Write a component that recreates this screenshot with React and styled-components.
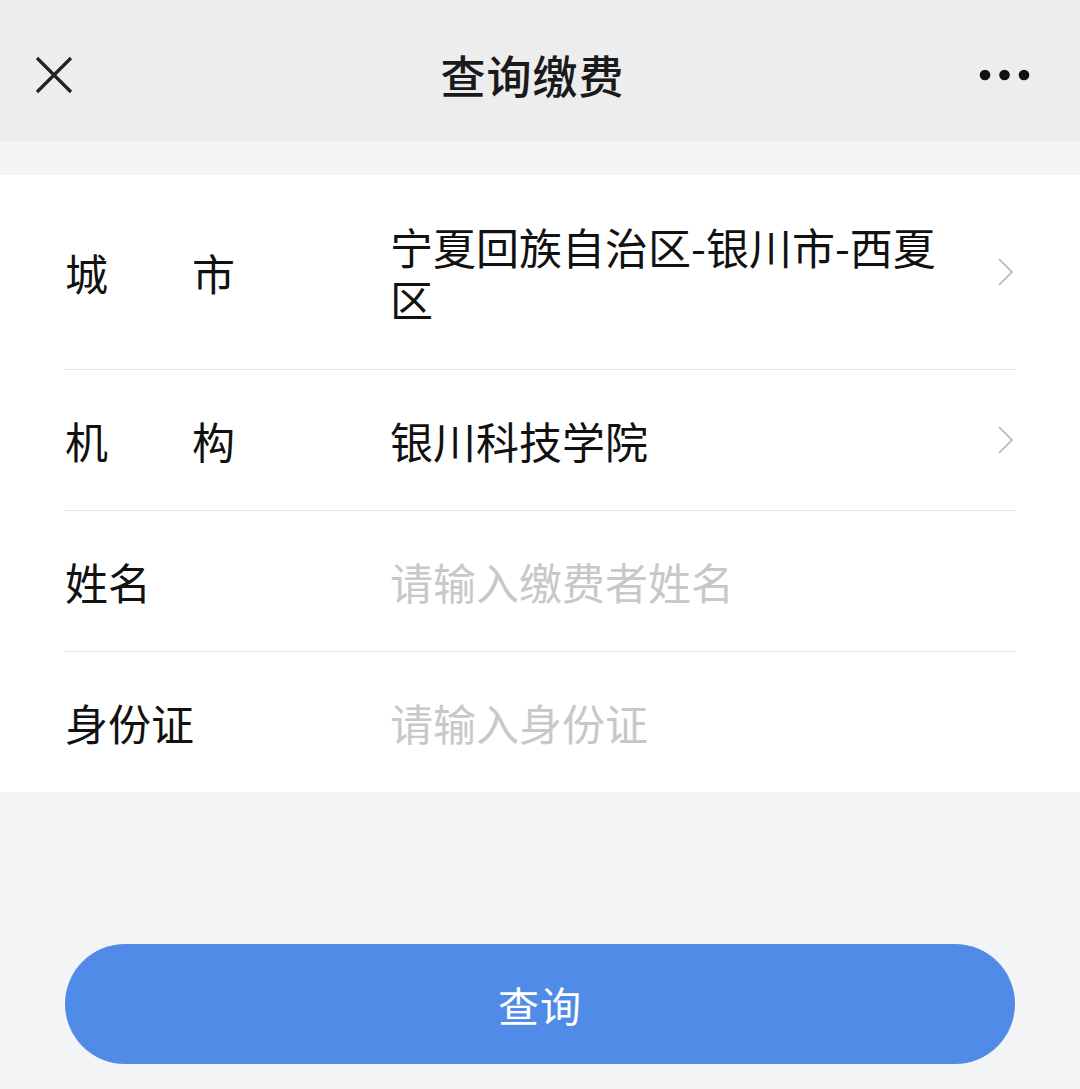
import React from "react";
import styled, { createGlobalStyle } from "styled-components";

const GlobalStyle = createGlobalStyle`
  html, body {
    margin: 0;
    padding: 0;
    background: #f3f4f6;
    font-family: "Noto Sans CJK SC", "Noto Sans", sans-serif;
  }
`;

const Page = styled.div`
  width: 1080px;
  min-height: 1089px;
  background: #f3f4f6;
`;

const Header = styled.div`
  height: 141px;
  background: #ededed;
  display: flex;
  align-items: center;
  justify-content: space-between;
  padding: 8px 49px 0 34px;
  box-sizing: border-box;
`;

const Title = styled.h1`
  margin: 0;
  font-size: 45px;
  font-weight: 500;
  color: #1a1a1a;
  letter-spacing: 1px;
`;

const IconBox = styled.div`
  width: 80px;
  display: flex;
  justify-content: ${(p) => (p.right ? "flex-end" : "flex-start")};
  align-items: center;
`;

const Card = styled.div`
  margin-top: 34px;
  background: #fff;
  padding: 0 65px;
`;

const Row = styled.div`
  display: flex;
  align-items: center;
  padding: ${(p) => (p.first ? "45px 0" : "44px 0")};
  border-top: ${(p) => (p.first ? "none" : "1px solid #e6e6e6")};
  font-size: 43px;
  line-height: 52px;
  color: #111;
`;

const Label = styled.div`
  width: ${(p) => (p.justify ? "170px" : "auto")};
  text-align: ${(p) => (p.justify ? "justify" : "left")};
  text-align-last: ${(p) => (p.justify ? "justify" : "auto")};
  flex-shrink: 0;
`;

const LabelCell = styled.div`
  width: 325px;
  flex-shrink: 0;
`;

const Value = styled.div`
  flex: 1;
  max-width: 580px;
  color: ${(p) => (p.placeholder ? "#c8c8c8" : "#111")};
`;

const Arrow = styled.div`
  margin-left: auto;
  display: flex;
  align-items: center;
`;

const Button = styled.button`
  display: block;
  margin: 152px auto 0;
  width: 950px;
  height: 120px;
  border: none;
  border-radius: 60px;
  background: #518be8;
  color: #fff;
  font-family: "Noto Sans CJK SC", "Noto Sans", sans-serif;
  font-size: 41px;
  letter-spacing: 1px;
  cursor: pointer;
`;

const Chevron = () => (
  <svg width="18" height="30" viewBox="0 0 18 30">
    <path d="M2 2 L15 15 L2 28" fill="none" stroke="#b5b5b5" strokeWidth="1.6" />
  </svg>
);

const rows = [
  { label: "城市", justify: true, value: "宁夏回族自治区-银川市-西夏区", arrow: true },
  { label: "机构", justify: true, value: "银川科技学院", arrow: true },
  { label: "姓名", value: "请输入缴费者姓名", placeholder: true },
  { label: "身份证", value: "请输入身份证", placeholder: true },
];

export default function App() {
  return (
    <Page>
      <GlobalStyle />
      <Header>
        <IconBox>
          <svg width="40" height="40" viewBox="0 0 40 40">
            <path d="M3 3 L37 37 M37 3 L3 37" stroke="#222" strokeWidth="3.2" />
          </svg>
        </IconBox>
        <Title>查询缴费</Title>
        <IconBox right>
          <svg width="52" height="12" viewBox="0 0 52 12">
            <circle cx="6" cy="6" r="5.3" fill="#111" />
            <circle cx="25.5" cy="6" r="5.3" fill="#111" />
            <circle cx="45" cy="6" r="5.3" fill="#111" />
          </svg>
        </IconBox>
      </Header>
      <Card>
        {rows.map((r, i) => (
          <Row key={r.label} first={i === 0}>
            <LabelCell>
              <Label justify={r.justify}>{r.label}</Label>
            </LabelCell>
            <Value placeholder={r.placeholder}>{r.value}</Value>
            {r.arrow && (
              <Arrow>
                <Chevron />
              </Arrow>
            )}
          </Row>
        ))}
      </Card>
      <Button>查询</Button>
    </Page>
  );
}
